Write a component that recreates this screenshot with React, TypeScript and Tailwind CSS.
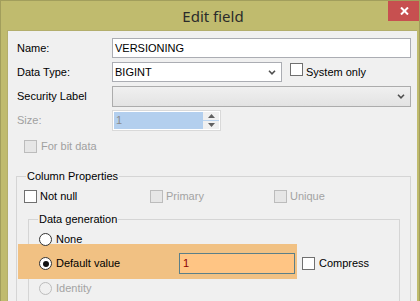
import React from "react";

const font = { fontFamily: '"Liberation Sans", Arial, sans-serif' };

function Check({ disabled }: { disabled?: boolean }) {
  return (
    <span
      className={
        "inline-block w-[13px] h-[13px] shrink-0 border " +
        (disabled ? "border-[#bcbcbc] bg-[#e6e6e6]" : "border-[#707070] bg-white")
      }
    />
  );
}

function Radio({ checked, disabled }: { checked?: boolean; disabled?: boolean }) {
  return (
    <span
      className={
        "flex items-center justify-center w-[13px] h-[13px] shrink-0 rounded-full border " +
        (disabled ? "border-[#bcbcbc] bg-[#f0f0f0]" : "border-[#333333] bg-white")
      }
    >
      {checked && <span className="block w-[6px] h-[6px] rounded-full bg-[#111111]" />}
    </span>
  );
}

function Chevron() {
  return (
    <svg width="8" height="5" viewBox="0 0 8 5" className="shrink-0">
      <polyline points="1,0.8 4,3.8 7,0.8" fill="none" stroke="#505050" strokeWidth="1.6" />
    </svg>
  );
}

export default function App() {
  return (
    <div
      className="w-[420px] h-[301px] overflow-hidden bg-[#c0bb6e] border-t border-l border-r border-[#a29e5c] flex flex-col text-[11px] text-black"
      style={font}
    >
      {/* Title bar */}
      <div className="relative h-[29px] shrink-0 flex items-center justify-center pl-[6px]">
        <span
          className="text-[15px] text-[#2b2b2b] leading-none mt-[1px]"
          style={{ fontFamily: '"Noto Sans", "Open Sans", sans-serif' }}
        >
          Edit field
        </span>
        <div className="absolute top-[-1px] right-[-1px] w-[32px] h-[21px] bg-[#c75050] flex items-center justify-center">
          <svg width="9" height="8" viewBox="0 0 9 8">
            <line x1="1" y1="0.5" x2="8" y2="7.5" stroke="white" strokeWidth="2" />
            <line x1="8" y1="0.5" x2="1" y2="7.5" stroke="white" strokeWidth="2" />
          </svg>
        </div>
      </div>

      {/* Body */}
      <div className="flex-1 flex pl-[6px] pr-[2px] min-h-0">
        <div className="flex-1 bg-[#f0f0f0] border-t border-l border-[#b3ae6c] pt-[7px] pl-[9px] min-h-0 overflow-hidden">
          {/* Name */}
          <div className="flex items-center h-[20px]">
            <span className="w-[95px]">Name:</span>
            <div className="w-[299px] h-[20px] bg-white border border-[#abadb3] flex items-center pl-[2px]">
              VERSIONING
            </div>
          </div>
          {/* Data type */}
          <div className="flex items-center h-[20px] mt-[4px]">
            <span className="w-[95px]">Data Type:</span>
            <div className="w-[170px] h-[20px] bg-white border border-[#abadb3] flex items-center justify-between pl-[2px] pr-[5px]">
              <span>BIGINT</span>
              <Chevron />
            </div>
            <span className="ml-[8px]">
              <Check />
            </span>
            <span className="ml-[3px]">System only</span>
          </div>
          {/* Security label */}
          <div className="flex items-center h-[21px] mt-[4px]">
            <span className="w-[95px]">Security Label</span>
            <div className="w-[299px] h-[21px] bg-gradient-to-b from-[#f0f0f0] to-[#e3e3e3] border border-[#acacac] flex items-center justify-end pr-[5px]">
              <Chevron />
            </div>
          </div>
          {/* Size */}
          <div className="flex items-center h-[21px] mt-[3px]">
            <span className="w-[95px] text-[#a0a0a0]">Size:</span>
            <div className="w-[109px] h-[21px] border border-[#d9d9d9] bg-white p-[1px] flex">
              <div className="flex-1 bg-[#b3cfee] text-[#8c8c8c] flex items-center pl-[2px]">1</div>
              <div className="w-[16px] flex flex-col relative">
                <div className="flex-1 flex items-center justify-center bg-[#f0f0f0] border-b border-[#b9d3ee]">
                  <svg width="7" height="4" viewBox="0 0 7 4">
                    <polygon points="0,4 7,4 3.5,0" fill="#606060" />
                  </svg>
                </div>
                <div className="flex-1 flex items-center justify-center bg-[#f0f0f0]">
                  <svg width="7" height="4" viewBox="0 0 7 4">
                    <polygon points="0,0 7,0 3.5,4" fill="#606060" />
                  </svg>
                </div>
              </div>
            </div>
          </div>
          {/* For bit data */}
          <div className="flex items-center h-[13px] mt-[9px] ml-[7px]">
            <Check disabled />
            <span className="ml-[4px] text-[#a0a0a0]">For bit data</span>
          </div>

          {/* Column Properties group */}
          <div className="relative mt-[23px] ml-[-1px] w-[395px] h-[200px] border border-[#d5d5d5] pt-[13px] pl-[7px]">
            <span className="absolute top-[-8px] left-[9px] px-[1px] bg-[#f0f0f0] leading-[14px]">
              Column Properties
            </span>
            <div className="flex items-center h-[13px]">
              <div className="w-[126px] flex items-center">
                <Check />
                <span className="ml-[3px]">Not null</span>
              </div>
              <div className="w-[124px] flex items-center">
                <Check disabled />
                <span className="ml-[3px] text-[#a3a3a3]">Primary</span>
              </div>
              <div className="flex items-center">
                <Check disabled />
                <span className="ml-[3px] text-[#a3a3a3]">Unique</span>
              </div>
            </div>

            {/* Data generation group */}
            <div className="relative mt-[16px] ml-[4px] w-[372px] h-[150px] border border-[#d5d5d5] pt-[13px] pl-[10px]">
              <span className="absolute top-[-8px] left-[9px] px-[1px] bg-[#f0f0f0] leading-[14px]">
                Data generation
              </span>
              <div className="relative z-10 flex items-center h-[13px]">
                <Radio />
                <span className="ml-[4px]">None</span>
              </div>
              <div className="flex items-start mt-[-2px] ml-[-21px]">
                <div className="w-[279px] h-[35px] bg-[#f1c183] pt-[4px] pl-[21px] flex items-center">
                  <Radio checked />
                  <span className="ml-[4px] w-[123px]">Default value</span>
                  <div className="w-[116px] h-[21px] bg-[#ffc584] border border-[#5b7f88] flex items-center pl-[3px] text-[#8b0000]">
                    1
                  </div>
                </div>
                <div className="h-[35px] pt-[4px] ml-[5px] flex items-center">
                  <Check />
                  <span className="ml-[4px]">Compress</span>
                </div>
              </div>
              <div className="flex items-center h-[13px] mt-[3px]">
                <Radio disabled />
                <span className="ml-[4px] text-[#a3a3a3]">Identity</span>
              </div>
            </div>
          </div>
        </div>
      </div>
    </div>
  );
}
